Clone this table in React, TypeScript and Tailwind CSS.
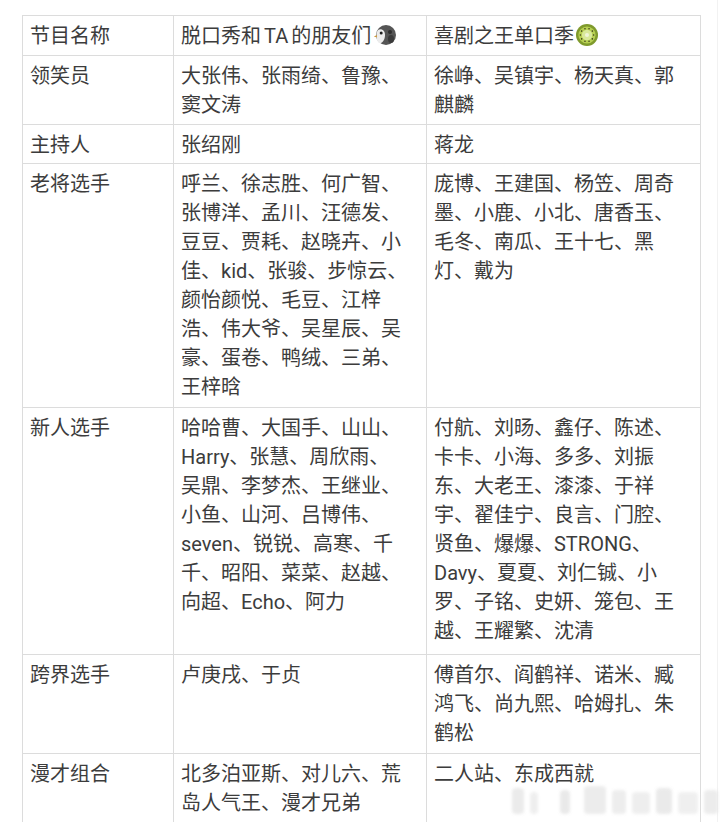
import React from "react";

const Penguin = () => (
  <svg width="24" height="22" viewBox="0 0 24 22" className="inline-block align-[-3px] ml-[2px]">
    <circle cx="13" cy="11" r="10" fill="#555" />
    <path d="M5 6 C8 4 12 6 12 11 C12 16 9 20 6 19 C3 17 2.5 9 5 6 Z" fill="#ececec" />
    <circle cx="8.2" cy="9" r="1.5" fill="#1e1e1e" />
    <path d="M4 11 L0.8 12.4 L4 13.6 Z" fill="#c99a45" />
    <circle cx="17" cy="8" r="2" fill="#2e2e2e" />
    <ellipse cx="18" cy="15" rx="3" ry="4" fill="#3a3a3a" />
  </svg>
);

const Kiwi = () => (
  <svg width="24" height="24" viewBox="0 0 24 24" className="inline-block align-[-4px] ml-[1px]">
    <circle cx="12" cy="12" r="11" fill="#7f9a2c" />
    <circle cx="12" cy="12" r="8.6" fill="#b6cf52" />
    <circle cx="12" cy="12" r="5.2" fill="#d9e89a" />
    {Array.from({ length: 10 }).map((_, i) => {
      const a = (i / 10) * Math.PI * 2;
      return <circle key={i} cx={12 + Math.cos(a) * 6.6} cy={12 + Math.sin(a) * 6.6} r="0.8" fill="#3b3b1a" />;
    })}
    <circle cx="12" cy="12" r="2" fill="#f0f5d8" />
  </svg>
);

type Row = { h: string; label: string; a: React.ReactNode[]; b: React.ReactNode[] };

const rows: Row[] = [
  {
    h: "h-[40px]",
    label: "节目名称",
    a: [
      <span key="x">
        脱口秀和<span className="mx-[3px]">TA</span>的朋友们<Penguin />
      </span>,
    ],
    b: [<span key="y">喜剧之王单口季<Kiwi /></span>],
  },
  {
    h: "h-[69px]",
    label: "领笑员",
    a: ["大张伟、张雨绮、鲁豫、", "窦文涛"],
    b: ["徐峥、吴镇宇、杨天真、郭", "麒麟"],
  },
  { h: "h-[39px]", label: "主持人", a: ["张绍刚"], b: ["蒋龙"] },
  {
    h: "h-[244px]",
    label: "老将选手",
    a: [
      "呼兰、徐志胜、何广智、",
      "张博洋、孟川、汪德发、",
      "豆豆、贾耗、赵晓卉、小",
      "佳、kid、张骏、步惊云、",
      "颜怡颜悦、毛豆、江梓",
      "浩、伟大爷、吴星辰、吴",
      "豪、蛋卷、鸭绒、三弟、",
      "王梓晗",
    ],
    b: ["庞博、王建国、杨笠、周奇", "墨、小鹿、小北、唐香玉、", "毛冬、南瓜、王十七、黑", "灯、戴为"],
  },
  {
    h: "h-[247px]",
    label: "新人选手",
    a: [
      "哈哈曹、大国手、山山、",
      "Harry、张慧、周欣雨、",
      "吴鼎、李梦杰、王继业、",
      "小鱼、山河、吕博伟、",
      "seven、锐锐、高寒、千",
      "千、昭阳、菜菜、赵越、",
      "向超、Echo、阿力",
    ],
    b: [
      "付航、刘旸、鑫仔、陈述、",
      "卡卡、小海、多多、刘振",
      "东、大老王、漆漆、于祥",
      "宇、翟佳宁、良言、门腔、",
      "贤鱼、爆爆、STRONG、",
      "Davy、夏夏、刘仁铖、小",
      "罗、子铭、史妍、笼包、王",
      "越、王耀繁、沈清",
    ],
  },
  {
    h: "h-[99px]",
    label: "跨界选手",
    a: ["卢庚戌、于贞"],
    b: ["傅首尔、阎鹤祥、诺米、臧", "鸿飞、尚九熙、哈姆扎、朱", "鹤松"],
  },
  {
    h: "h-[100px]",
    label: "漫才组合",
    a: ["北多泊亚斯、对儿六、荒", "岛人气王、漫才兄弟"],
    b: ["二人站、东成西就"],
  },
];

const Cell = ({ lines, h, w }: { lines: React.ReactNode[]; h: string; w: string }) => (
  <div className={`${h} ${w} shrink-0 border-r border-b border-[#dcdcdc] pl-[7px] pt-[6px]`}>
    {lines.map((l, i) => (
      <div key={i} className="whitespace-nowrap leading-[29px]">
        {l}
      </div>
    ))}
  </div>
);

export default function App() {
  return (
    <div
      className="relative w-[720px] h-[822px] overflow-hidden bg-white text-[20px] text-[#3c3c3c]"
      style={{ fontFamily: 'Roboto, "Noto Sans CJK SC", "Noto Sans", sans-serif' }}
    >
      <div className="ml-[22px] mt-[15px] w-[679px] border-l border-t border-[#dcdcdc] flex flex-col">
        {rows.map((r, i) => (
          <div key={i} className="flex">
            <Cell lines={[r.label]} h={r.h} w="w-[151px]" />
            <Cell lines={r.a} h={r.h} w="w-[253px]" />
            <Cell lines={r.b} h={r.h} w="w-[274px]" />
          </div>
        ))}
      </div>
      <div className="absolute right-[2px] top-0 h-full w-px bg-[#f2f2f2]" />
      <div className="absolute left-[512px] top-[786px] flex items-end gap-[6px] blur-[1.5px] opacity-60">
        <div className="h-[26px] w-[12px] rounded-sm bg-[#dedede]" />
        <div className="h-[22px] w-[8px] rounded-sm bg-[#e4e4e4]" />
        <div className="ml-[16px] h-[24px] w-[10px] rounded-sm bg-[#dcdcdc]" />
        <div className="ml-[8px] h-[28px] w-[22px] rounded-sm bg-[#e0e0e0]" />
        <div className="h-[24px] w-[14px] rounded-sm bg-[#e2e2e2]" />
        <div className="h-[22px] w-[18px] rounded-sm bg-[#e4e4e4]" />
        <div className="h-[26px] w-[16px] rounded-sm bg-[#dddddd]" />
        <div className="h-[22px] w-[20px] rounded-sm bg-[#e6e6e6]" />
        <div className="h-[24px] w-[14px] rounded-sm bg-[#e0e0e0]" />
        <div className="h-[20px] w-[12px] rounded-sm bg-[#e8e8e8]" />
      </div>
    </div>
  );
}
